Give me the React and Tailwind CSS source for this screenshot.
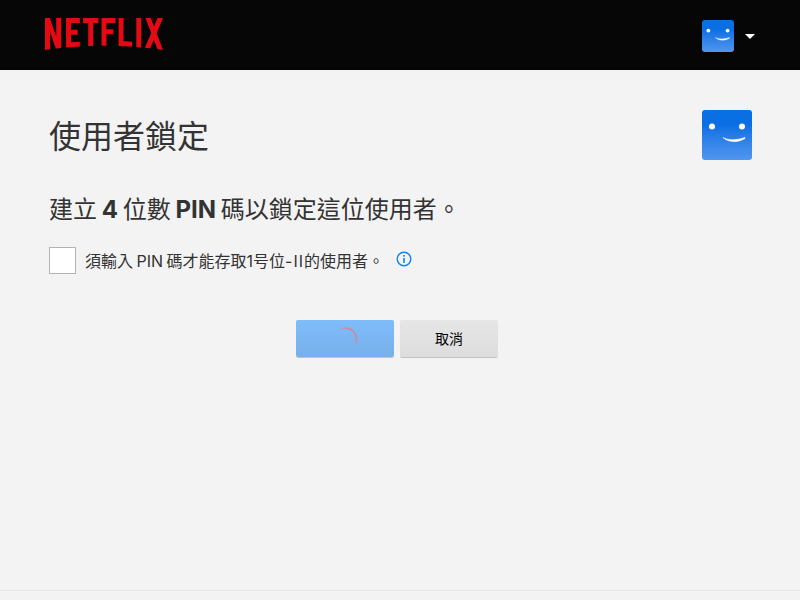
const NETFLIX_PATH = 'M105.06233,14.2806261 L110.999156,30 C109.249227,29.7497422 107.500234,29.4366857 105.718437,29.1554972 L102.374168,20.4686475 L98.9371075,28.4375293 C97.2499766,28.1563408 95.5928391,28.061674 93.9057081,27.8432843 L99.9372012,14.0931671 L94.4680851,0 L99.5313525,0 L102.593495,7.87421502 L105.874965,0 L110.999156,0 L105.06233,14.2806261 Z M90.4686475,0 L85.8749649,0 L85.8749649,27.2499766 C87.3746368,27.3437061 88.9371075,27.4055675 90.4686475,27.5930265 L90.4686475,0 Z M81.9055207,26.93692 C77.7186241,26.6557316 73.5307901,26.4064111 69.250164,26.3117443 L69.250164,0 L73.9366389,0 L73.9366389,21.8745899 C76.6248008,21.9373887 79.3120255,22.1557784 81.9055207,22.2804387 L81.9055207,26.93692 Z M64.2496954,10.6561065 L64.2496954,15.3435186 L57.8442216,15.3435186 L57.8442216,25.9996251 L53.2186709,25.9996251 L53.2186709,0 L66.3436123,0 L66.3436123,4.68741213 L57.8442216,4.68741213 L57.8442216,10.6561065 L64.2496954,10.6561065 Z M45.3435186,4.68741213 L45.3435186,26.2498828 C43.7810479,26.2498828 42.1876465,26.2498828 40.6561065,26.3117443 L40.6561065,4.68741213 L35.8121661,4.68741213 L35.8121661,0 L50.2183897,0 L50.2183897,4.68741213 L45.3435186,4.68741213 Z M30.749836,15.5928391 C28.687787,15.5928391 26.2498828,15.5928391 24.5001406,15.6875059 L24.5001406,22.6562939 C27.2499766,22.4678976 30,22.2495079 32.7809542,22.1557784 L32.7809542,26.6557316 L19.812528,27.6876933 L19.812528,0 L32.7809542,0 L32.7809542,4.68741213 L24.5001406,4.68741213 L24.5001406,10.9991564 C26.3127644,10.9991564 29.0936485,10.9054269 30.749836,10.9054269 L30.749836,15.5928391 Z M4.78114163,12.9684132 L4.78114163,29.3429562 C3.09401069,29.5313525 1.59340144,29.7497422 0,30 L0,0 L4.4690224,0 L10.562377,17.0315868 L10.562377,0 L15.2497891,0 L15.2497891,28.061674 C13.5935047,28.3437061 11.906374,28.4375293 10.1246426,28.6868498 L4.78114163,12.9684132 Z'

function Avatar({ className }) {
  return (
    <div className={`rounded-[3px] bg-gradient-to-b from-[#0a6fe3] from-30% to-[#4f96ee] overflow-hidden shrink-0 ${className}`}>
      <svg viewBox="0 0 50 50" className="w-full h-full block">
        <circle cx="10" cy="16.5" r="3" fill="#fff" />
        <circle cx="40" cy="16.5" r="3" fill="#fff" />
        <path d="M21 27.5 C26 30.5 34 30.5 43 27.5 L43 28.5 C36 33 26 32.5 21 27.5 Z" fill="#fff" stroke="#fff" strokeWidth="0.6" />
      </svg>
    </div>
  )
}

export default function App() {
  return (
    <div className="w-[800px] h-[600px] bg-[#f3f3f3] flex flex-col overflow-hidden font-['Inter','Noto_Sans_CJK_TC',sans-serif] text-[#333]">
      <header className="h-[70px] bg-[#060606] flex items-center justify-between px-[45px] shrink-0">
        <svg viewBox="0 0 111 30" preserveAspectRatio="none" className="w-[118px] h-[32px] -mt-[2px]">
          <path d={NETFLIX_PATH} fill="#e50914" />
        </svg>
        <div className="flex items-center mt-[2px]">
          <Avatar className="w-[32px] h-[32px]" />
          <div className="ml-[11px] w-0 h-0 border-x-[5px] border-x-transparent border-t-[5px] border-t-white" />
        </div>
      </header>

      <main className="flex-1 pl-[49px] pr-[48px]">
        <div className="flex items-start justify-between mt-[40px]">
          <h1 className="text-[32px] leading-[46px] font-normal mt-[4px]">使用者鎖定</h1>
          <Avatar className="w-[50px] h-[50px]" />
        </div>

        <h2 className="mt-[24px] text-[24px] leading-[52px] font-normal h-[50px] [word-spacing:-2px]">
          建立 <b className="font-bold">4</b> 位數 <b className="font-bold">PIN</b> 碼以鎖定這位使用者。
        </h2>

        <div className="mt-[12px] flex items-center">
          <div className="w-[27px] h-[27px] bg-white border border-[#b3b3b3] shrink-0" />
          <span className="ml-[9px] mt-[2px] text-[16px] leading-[27px] [word-spacing:-1px]">
            須輸入 PIN 碼才能存取1号位<span className="tracking-[1px]">-II</span>的使用者。
          </span>
          <svg viewBox="0 0 16 16" className="w-[16px] h-[16px] ml-[12px] -mt-[3px]" fill="none">
            <circle cx="8" cy="8" r="6.8" stroke="#0a84ff" strokeWidth="1.4" />
            <rect x="7.2" y="7" width="1.6" height="5" fill="#0a84ff" />
            <rect x="7.2" y="4" width="1.6" height="1.7" fill="#0a84ff" />
          </svg>
        </div>

        <div className="mt-[45px] flex justify-center gap-[6px] -translate-x-[4px]">
          <button className="w-[98px] h-[37px] rounded-[2px] bg-gradient-to-b from-[#7ebcfb] to-[#77b0ea] shadow-[0_1px_0_rgba(0,0,0,0.2)] flex items-center justify-center">
            <svg viewBox="0 0 24 24" className="w-[24px] h-[24px]" fill="none">
              <defs>
                <linearGradient id="spin" x1="0" y1="0" x2="1" y2="0">
                  <stop offset="0" stopColor="#e07f90" stopOpacity="0" />
                  <stop offset="0.6" stopColor="#e07f90" />
                </linearGradient>
              </defs>
              <path d="M3 5 C8 0 16 0 20 4 C23 7 24 11 23 16" stroke="url(#spin)" strokeWidth="1.5" />
            </svg>
          </button>
          <button className="w-[98px] h-[37px] rounded-[2px] bg-gradient-to-b from-[#e6e6e6] to-[#dddddd] shadow-[0_1px_0_rgba(0,0,0,0.2)] text-[14px] text-black pl-px">
            取消
          </button>
        </div>
      </main>

      <div className="h-[10px] border-t border-[#e6e6e6] shrink-0" />
    </div>
  )
}
